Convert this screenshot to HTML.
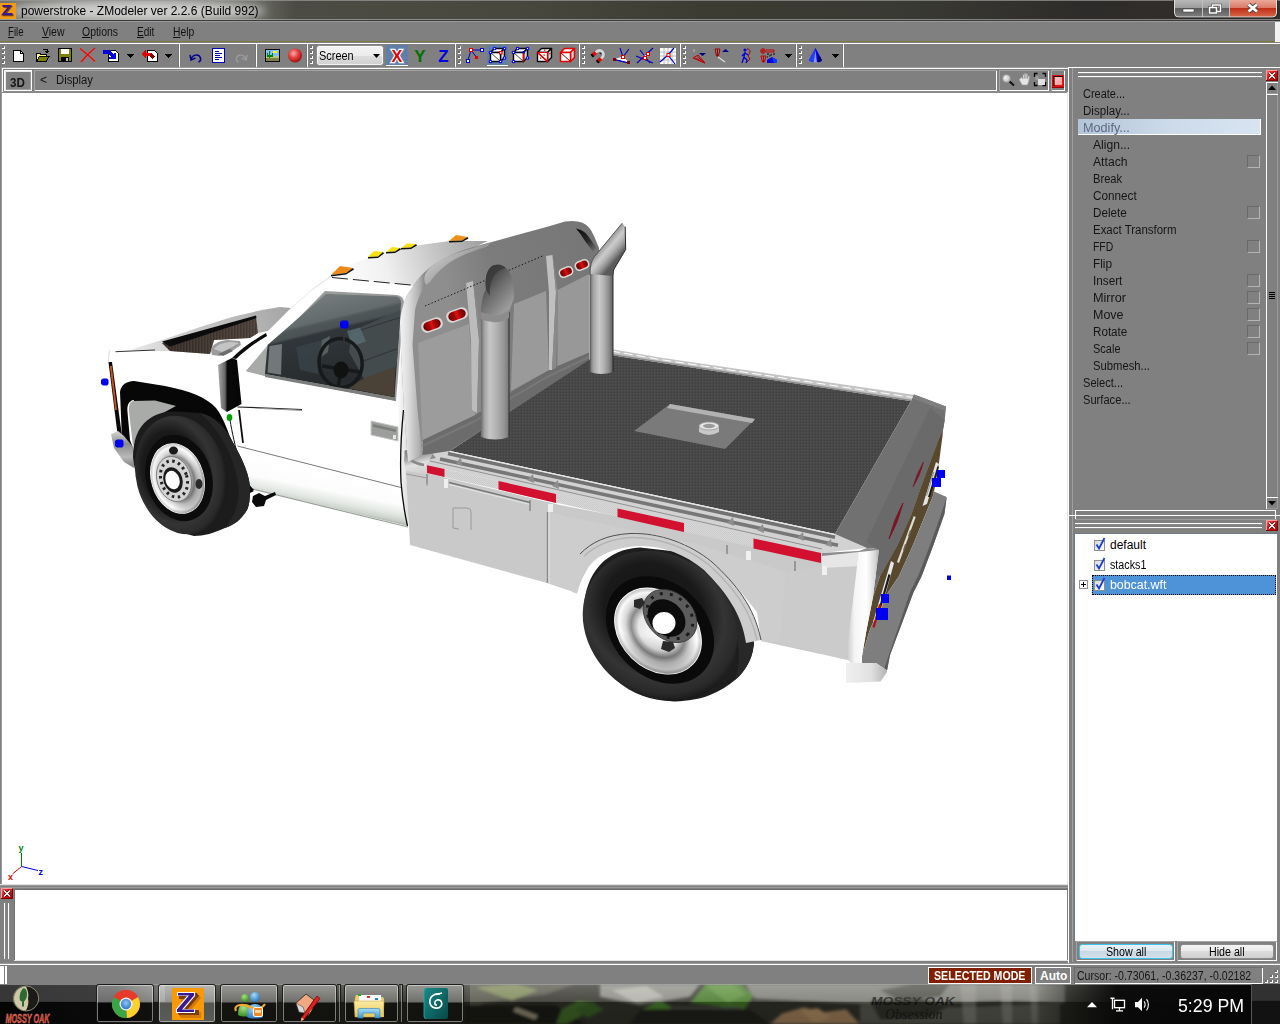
<!DOCTYPE html>
<html><head><meta charset="utf-8">
<style>
*{margin:0;padding:0;box-sizing:border-box}
html,body{width:1280px;height:1024px;overflow:hidden;background:#808080;font-family:"Liberation Sans",sans-serif;font-size:12px;color:#111}
.a{position:absolute}
.t{position:absolute;white-space:nowrap;transform-origin:0 0}
#title{left:0;top:0;width:1280px;height:21px;background:#4a4a44}
#menubar{left:0;top:21px;width:1280px;height:21px;background:#808080;border-top:1px solid #9a9a9a;border-bottom:1px solid #7c7c40}
#tb{left:0;top:43px;width:1280px;height:25px;background:#808080;border-top:1px solid #fff}
.hl{position:absolute;height:1px;background:#fff}
.vl{position:absolute;width:1px;background:#fff}
.box{position:absolute;border:1px solid #fff;box-shadow:0 0 0 1px #8c8c8c}
#vp{left:2px;top:93px;width:1065px;height:791px;background:#fff}
#msg{left:15px;top:890px;width:1052px;height:70px;background:#fff}
#tree{left:1075px;top:534px;width:202px;height:407px;background:#fff}
#task{left:0;top:984px;width:1280px;height:40px;background:#3a3a30;overflow:hidden}
.cmd{position:absolute;left:1083px;font-size:12px;color:#151515}
.cmd2{position:absolute;left:1093px;font-size:12px;color:#151515}
.cb{position:absolute;left:1247px;width:13px;height:13px;border:1px solid #b4b4b4;border-top-color:#6a6a6a;border-left-color:#6a6a6a}
</style></head><body>
<!--TITLE-->
<div class="a" id="title">
<svg class="a" style="left:0;top:0" width="1280" height="21">
<defs><linearGradient id="tg" x1="0" x2="1"><stop offset="0" stop-color="#74746f"/><stop offset=".12" stop-color="#8a8a86"/><stop offset=".2" stop-color="#6a6a64"/><stop offset=".23" stop-color="#4c4c44"/><stop offset=".4" stop-color="#48483e"/><stop offset=".55" stop-color="#3c3c32"/><stop offset=".7" stop-color="#3a3a34"/><stop offset=".85" stop-color="#2e2c2a"/><stop offset="1" stop-color="#34302c"/></linearGradient>
<filter id="bl"><feGaussianBlur stdDeviation="5"/></filter></defs>
<rect width="1280" height="21" fill="url(#tg)"/>
<ellipse cx="138" cy="11" rx="128" ry="10" fill="#dcdcdc" opacity=".85" filter="url(#bl)"/><rect x="0" y="0" width="1280" height="1" fill="#9a9a98" opacity=".7"/>
<rect x="0" y="19" width="1280" height="1" fill="#b8b8b8" opacity=".6"/><rect x="0" y="20" width="1280" height="1" fill="#3a3a3a"/>
<rect x="0" y="3" width="16" height="16" fill="#f39a14"/>
<path d="M3.5 6h9.5l-6.5 8h7v2.3h-11.5l6.8-8.2h-5.3z" fill="#7a4a10"/>
<path d="M2.5 5h9.5l-6.5 8h7v2.3h-11.5l6.8-8.2h-5.3z" fill="#3a1a8a"/>
</svg>
<div class="t" style="left:21px;top:3px;font-size:13px;color:#000;transform:scaleX(.921)">powerstroke - ZModeler ver 2.2.6 (Build 992)</div>
<svg class="a" style="left:1173px;top:0" width="107" height="19">
<defs><linearGradient id="wb" x1="0" y1="0" x2="0" y2="1"><stop offset="0" stop-color="#b8b8b8"/><stop offset=".45" stop-color="#9c9c9c"/><stop offset=".5" stop-color="#5c5c5c"/><stop offset="1" stop-color="#7e7e7e"/></linearGradient>
<linearGradient id="wr" x1="0" y1="0" x2="0" y2="1"><stop offset="0" stop-color="#eaa898"/><stop offset=".45" stop-color="#dc7a68"/><stop offset=".5" stop-color="#c03018"/><stop offset="1" stop-color="#d8684a"/></linearGradient></defs>
<path d="M1.500 0v13q0 4 4 4h94q4 0 4 -4v-13z" fill="url(#wb)"/>
<path d="M57 0h46.500v13q0 4 -4 4h-42.500z" fill="url(#wr)"/>
<path d="M29.500 0v17M56.500 0v17" stroke="#c0c0c0" stroke-width="1"/>
<path d="M1.500 0v13q0 4 4 4h94q4 0 4 -4v-13" fill="none" stroke="#dedede" stroke-width="1"/>
<path d="M.5 0v13q0 5 5 5h94q5 0 5 -5v-13" fill="none" stroke="#222" stroke-width="1" opacity=".6"/>
<rect x="10" y="9" width="11" height="3" fill="#fff" stroke="#444" stroke-width=".6"/>
<path d="M39.500 5h8v6.500h-8zM36.500 7.500h7v5.500h-7z" fill="none" stroke="#444" stroke-width="2.600"/>
<path d="M39.500 5h8v6.500h-8z" fill="none" stroke="#fff" stroke-width="1.500"/><path d="M36.500 7.500h7v5.500h-7z" fill="#555" stroke="#fff" stroke-width="1.500"/>
<path d="M75.500 4.500l8.500 7m0 -7l-8.500 7" stroke="#444" stroke-width="4.400"/><path d="M75.500 4.500l8.500 7m0 -7l-8.500 7" stroke="#fff" stroke-width="2.800"/>
</svg>
</div>
<!--MENU-->
<div class="a" id="menubar"></div>
<div class="t" style="left:8px;top:25px;font-size:12px;transform:scaleX(0.8)"><u>F</u>ile</div><div class="t" style="left:42px;top:25px;font-size:12px;transform:scaleX(0.87)"><u>V</u>iew</div><div class="t" style="left:82px;top:25px;font-size:12px;transform:scaleX(0.87)"><u>O</u>ptions</div><div class="t" style="left:137px;top:25px;font-size:12px;transform:scaleX(0.84)"><u>E</u>dit</div><div class="t" style="left:173px;top:25px;font-size:12px;transform:scaleX(0.86)"><u>H</u>elp</div>
<div class="a" style="left:1275px;top:22px;width:5px;height:20px;background:#f2f2f2"></div>
<!--TOOLBAR-->
<div class="a" id="tb"></div>
<svg class="a" style="left:0;top:0" width="1280" height="68" shape-rendering="crispEdges">
<rect x="2" y="46" width="3" height="3" fill="#fff"/><rect x="2" y="46" width="2" height="2" fill="#6c6c6c"/><rect x="2" y="51" width="3" height="3" fill="#fff"/><rect x="2" y="51" width="2" height="2" fill="#6c6c6c"/><rect x="2" y="56" width="3" height="3" fill="#fff"/><rect x="2" y="56" width="2" height="2" fill="#6c6c6c"/><rect x="2" y="61" width="3" height="3" fill="#fff"/><rect x="2" y="61" width="2" height="2" fill="#6c6c6c"/><rect x="310" y="46" width="3" height="3" fill="#fff"/><rect x="310" y="46" width="2" height="2" fill="#6c6c6c"/><rect x="310" y="51" width="3" height="3" fill="#fff"/><rect x="310" y="51" width="2" height="2" fill="#6c6c6c"/><rect x="310" y="56" width="3" height="3" fill="#fff"/><rect x="310" y="56" width="2" height="2" fill="#6c6c6c"/><rect x="310" y="61" width="3" height="3" fill="#fff"/><rect x="310" y="61" width="2" height="2" fill="#6c6c6c"/><rect x="458" y="46" width="3" height="3" fill="#fff"/><rect x="458" y="46" width="2" height="2" fill="#6c6c6c"/><rect x="458" y="51" width="3" height="3" fill="#fff"/><rect x="458" y="51" width="2" height="2" fill="#6c6c6c"/><rect x="458" y="56" width="3" height="3" fill="#fff"/><rect x="458" y="56" width="2" height="2" fill="#6c6c6c"/><rect x="458" y="61" width="3" height="3" fill="#fff"/><rect x="458" y="61" width="2" height="2" fill="#6c6c6c"/><rect x="582" y="46" width="3" height="3" fill="#fff"/><rect x="582" y="46" width="2" height="2" fill="#6c6c6c"/><rect x="582" y="51" width="3" height="3" fill="#fff"/><rect x="582" y="51" width="2" height="2" fill="#6c6c6c"/><rect x="582" y="56" width="3" height="3" fill="#fff"/><rect x="582" y="56" width="2" height="2" fill="#6c6c6c"/><rect x="582" y="61" width="3" height="3" fill="#fff"/><rect x="582" y="61" width="2" height="2" fill="#6c6c6c"/><rect x="683" y="46" width="3" height="3" fill="#fff"/><rect x="683" y="46" width="2" height="2" fill="#6c6c6c"/><rect x="683" y="51" width="3" height="3" fill="#fff"/><rect x="683" y="51" width="2" height="2" fill="#6c6c6c"/><rect x="683" y="56" width="3" height="3" fill="#fff"/><rect x="683" y="56" width="2" height="2" fill="#6c6c6c"/><rect x="683" y="61" width="3" height="3" fill="#fff"/><rect x="683" y="61" width="2" height="2" fill="#6c6c6c"/><rect x="799" y="46" width="3" height="3" fill="#fff"/><rect x="799" y="46" width="2" height="2" fill="#6c6c6c"/><rect x="799" y="51" width="3" height="3" fill="#fff"/><rect x="799" y="51" width="2" height="2" fill="#6c6c6c"/><rect x="799" y="56" width="3" height="3" fill="#fff"/><rect x="799" y="56" width="2" height="2" fill="#6c6c6c"/><rect x="799" y="61" width="3" height="3" fill="#fff"/><rect x="799" y="61" width="2" height="2" fill="#6c6c6c"/><rect x="179" y="44" width="1" height="23" fill="#fff"/><rect x="178" y="44" width="1" height="23" fill="#777"/><rect x="256" y="44" width="1" height="23" fill="#fff"/><rect x="255" y="44" width="1" height="23" fill="#777"/><rect x="307" y="44" width="1" height="23" fill="#fff"/><rect x="306" y="44" width="1" height="23" fill="#777"/><rect x="455" y="44" width="1" height="23" fill="#fff"/><rect x="454" y="44" width="1" height="23" fill="#777"/><rect x="579" y="44" width="1" height="23" fill="#fff"/><rect x="578" y="44" width="1" height="23" fill="#777"/><rect x="680" y="44" width="1" height="23" fill="#fff"/><rect x="679" y="44" width="1" height="23" fill="#777"/><rect x="796" y="44" width="1" height="23" fill="#fff"/><rect x="795" y="44" width="1" height="23" fill="#777"/><rect x="843" y="44" width="1" height="23" fill="#fff"/><rect x="842" y="44" width="1" height="23" fill="#777"/><path d="M127 54h7l-3.500 4z" fill="#000"/><path d="M165 54h7l-3.500 4z" fill="#000"/><path d="M785 54h7l-3.500 4z" fill="#000"/><path d="M832 54h7l-3.500 4z" fill="#000"/>
<!-- new -->
<path d="M13.500 50.500h7l3 3v8h-10z" fill="#fff" stroke="#000"/><path d="M20.500 50.500v3h3" fill="none" stroke="#000"/>
<!-- open -->
<path d="M36 60.500v-7h4l1 1h5v2" fill="#ffff80" stroke="#000"/><path d="M36.500 61.500l3 -5h9.500l-3 5z" fill="#808000" stroke="#000"/><path d="M43 49.500h4v3m-1.500 -1.500l1.500 1.500l1.500 -1.500" fill="none" stroke="#000"/>
<!-- save -->
<rect x="58.500" y="48.500" width="13" height="13" fill="#808000" stroke="#000"/><rect x="61" y="49" width="8" height="5" fill="#fff"/><rect x="61" y="57" width="8" height="4" fill="#000"/><rect x="66" y="58" width="2" height="3" fill="#c0c0c0"/>
<!-- import -->
<path d="M108.500 50.500h7l3 3v8h-10z" fill="#fff" stroke="#000"/><path d="M103 50h6l5 4v-1h2v6h-7v-2h2l-3 -3h-5z" fill="#0000e0"/>
<!-- export -->
<path d="M147.500 50.500h7l3 3v8h-10z" fill="#fff" stroke="#000"/><path d="M141 54l5 -4v2.500h4l5 4l-2 2.500l-4 -3.500h-3v2.500z" fill="#e00000"/><path d="M151 53l4 3.500l-2 2.500l-3.500 -3z" fill="#800000"/>
<!-- doc blue -->
<rect x="212.500" y="48.500" width="12" height="14" fill="#fff" stroke="#0000c0"/><path d="M215 51.500h4M215 53.500h7M215 55.500h5M215 57.500h7M215 59.500h4" stroke="#0000c0"/>
<!-- picture -->
<rect x="265.500" y="49.500" width="14" height="12" fill="#c0c080" stroke="#000"/><rect x="266" y="50" width="13" height="6" fill="#80c0ff"/><rect x="273" y="51" width="4" height="2" fill="#ffff00"/><path d="M269.500 51v9M267.500 53v3h5v-3" stroke="#008000" stroke-width="1.500" fill="none"/><rect x="266" y="58" width="13" height="3" fill="#808040"/>
</svg>
<svg class="a" style="left:0;top:0" width="1280" height="68">
<defs><radialGradient id="rs" cx=".4" cy=".35" r=".65"><stop offset="0" stop-color="#ffb0b0"/><stop offset=".5" stop-color="#e84040"/><stop offset="1" stop-color="#a01010"/></radialGradient>
<linearGradient id="cbg" x1="0" y1="0" x2="0" y2="1"><stop offset="0" stop-color="#f4f4f4"/><stop offset=".5" stop-color="#ebebeb"/><stop offset=".52" stop-color="#dddddd"/><stop offset="1" stop-color="#cfcfcf"/></linearGradient></defs>
<!-- red X -->
<path d="M80 48.500c5 4 10 8 15 13M95 48c-5 4 -10 9 -14 14" stroke="#f00" stroke-width="1.300" fill="none"/>
<!-- undo -->
<path d="M190 55l1 5l4.500 -2M191 59c2 -5 8 -5 9.500 -1c.5 2 -.5 3.500 -2 4" fill="none" stroke="#000090" stroke-width="1.500"/>
<!-- redo -->
<path d="M247 55l-1 5l-4.500 -2M246 59c-2 -5 -8 -5 -9.500 -1c-.5 2 .5 3.500 2 4" fill="none" stroke="#999" stroke-width="1.500"/>
<circle cx="295" cy="55.500" r="7" fill="url(#rs)"/>
<!-- combobox -->
<rect x="316.500" y="45.500" width="67" height="20" rx="3" fill="url(#cbg)" stroke="#8a8a8a"/><rect x="317.500" y="46.500" width="65" height="18" rx="2" fill="none" stroke="#fff" opacity=".7"/>
<path d="M373 54h7l-3.500 4z" fill="#000"/>
<!-- XYZ -->
<rect x="386" y="45" width="22" height="21" fill="#5f7fa8"/><rect x="386" y="65" width="22" height="1" fill="#fff"/>
<text x="397" y="62" font-family="Liberation Sans" font-weight="700" font-size="17" text-anchor="middle" fill="#e00000" stroke="#fff" stroke-width="2.500" paint-order="stroke" transform="translate(397 0) scale(.95 1) translate(-397 0)">X</text>
<text x="420" y="62" font-family="Liberation Sans" font-weight="700" font-size="17" text-anchor="middle" fill="#007000">Y</text>
<text x="443.500" y="62" font-family="Liberation Sans" font-weight="700" font-size="17" text-anchor="middle" fill="#0000e0">Z</text>
<!-- sel modes -->
<rect x="487" y="45" width="21" height="21" fill="#5f7fa8"/><rect x="487" y="65" width="21" height="1" fill="#fff"/>
</svg>
<div class="t" style="left:319px;top:48px;font-size:13px;color:#000;transform:scaleX(.84)">Screen</div>
<svg class="a" style="left:0;top:0" width="1280" height="68">
<!-- polyline -->
<g transform="translate(466 48)"><path d="M2 12l3 -10h11M5 2l6 8" fill="none" stroke="#0000c0" stroke-width="1"/><rect x="3.5" y="0.5" width="3" height="3" fill="#fff" stroke="#e00000" stroke-width="1"/><rect x="14.5" y="0.5" width="3" height="3" fill="#fff" stroke="#0000e0" stroke-width="1"/><rect x="0.5" y="11.5" width="3" height="3" fill="#fff" stroke="#0000e0" stroke-width="1"/><rect x="9" y="8" width="3" height="3" fill="#e00000"/></g>
<g transform="translate(490 48)" fill="#fff" stroke="#000" stroke-width="1.4" stroke-linejoin="round"><path d="M.5 4.500l4 -4h10l-4 4z"/><path d="M14.500 .5v9l-4 4v-9z" fill="#d8d8d8"/><path d="M.5 4.500h10v9h-10z"/><path d="M.5 4.500l10 9" stroke="#444" stroke-width="1"/><circle cx="0.5" cy="4.5" r="1.300" fill="#fff" stroke="#0000f0" stroke-width="1.100"/><circle cx="4.5" cy="0.5" r="1.300" fill="#fff" stroke="#0000f0" stroke-width="1.100"/><circle cx="14.5" cy="0.5" r="1.300" fill="#fff" stroke="#0000f0" stroke-width="1.100"/><circle cx="14.5" cy="10" r="1.300" fill="#fff" stroke="#0000f0" stroke-width="1.100"/><circle cx="10.5" cy="13.5" r="1.300" fill="#fff" stroke="#0000f0" stroke-width="1.100"/><circle cx="0.5" cy="13.5" r="1.300" fill="#fff" stroke="#0000f0" stroke-width="1.100"/><rect x="9.500" y="3.500" width="2.500" height="2.500" fill="#fff" stroke="#e80000" stroke-width="1.200"/></g><g transform="translate(513 48)" fill="#fff" stroke="#000" stroke-width="1.4" stroke-linejoin="round"><path d="M.5 4.500l4 -4h10l-4 4z"/><path d="M14.500 .5v9l-4 4v-9z" fill="#d8d8d8"/><path d="M.5 4.500h10v9h-10z"/><path d="M.5 4.500l10 9" stroke="#444" stroke-width="1"/><path d="M10.500 4.500v9" stroke="#e80000" stroke-width="1.500"/><circle cx="0.5" cy="4.5" r="1.300" fill="#fff" stroke="#0000f0" stroke-width="1.100"/><circle cx="4.5" cy="0.5" r="1.300" fill="#fff" stroke="#0000f0" stroke-width="1.100"/><circle cx="14.5" cy="0.5" r="1.300" fill="#fff" stroke="#0000f0" stroke-width="1.100"/><circle cx="14.5" cy="10" r="1.300" fill="#fff" stroke="#0000f0" stroke-width="1.100"/><circle cx="0.5" cy="13.5" r="1.300" fill="#fff" stroke="#0000f0" stroke-width="1.100"/><rect x="9.500" y="3" width="2.500" height="2.500" fill="#0000f0" stroke="none"/></g><g transform="translate(537 48)" fill="#fff" stroke="#000" stroke-width="1.4" stroke-linejoin="round"><path d="M.5 4.500l4 -4h10l-4 4z"/><path d="M14.500 .5v9l-4 4v-9z" fill="#d8d8d8"/><path d="M.5 4.500h10v9h-10z"/><path d="M.5 4.500L10.500 13.500L10.500 4.500Z" fill="#fff" stroke="#e80000" stroke-width="1.200"/><path d="M.5 4.500L10.500 13.500" stroke="#e80000" stroke-width="1.200"/><rect x="3" y="9.500" width="1.300" height="1.300" fill="#e80000" stroke="none"/><rect x="6.500" y="6.500" width="1.300" height="1.300" fill="#e80000" stroke="none"/><rect x="7" y="1.500" width="1.300" height="1.300" fill="#e80000" stroke="none"/><rect x="12.300" y="5" width="1.300" height="1.300" fill="#e80000" stroke="none"/></g>
<g transform="translate(560 48)" fill="#fff" stroke="#e80000" stroke-width="1.5" stroke-linejoin="round"><path d="M.5 4.500l4 -4h10l-4 4z"/><path d="M14.500 .5v9l-4 4v-9z" fill="#d8d8d8"/><path d="M.5 4.500h10v9h-10z"/><path d="M.5 4.500l10 9" stroke="#900" stroke-width="1"/></g>
<!-- magnet -->
<g transform="translate(599.500 54.500) rotate(48)" fill="none"><path d="M-4 5V0A4 4 0 0 1 4 0V5" stroke="#777" stroke-width="4.200"/><path d="M-4 5V0A4 4 0 0 1 4 0V5" stroke="#d4d4d4" stroke-width="2.800"/><path d="M-4 1.500V5.500M4 1.500V5.500" stroke="#e80000" stroke-width="3.600"/><path d="M-4 5V7M4 5V7" stroke="#000" stroke-width="3.600"/><path d="M-1 -1l1.500 -1" stroke="#000" stroke-width="1"/></g>
<g transform="translate(613 48)"><path d="M7 0l3 9l6 -8M1 11.500l15 3.500" fill="none" stroke="#0000c0" stroke-width="1.100"/><path d="M2 11l8 -2.500l6 6z" fill="#fff"/><path d="M1 11.500l15 3.500" fill="none" stroke="#0000c0" stroke-width="1.100"/><rect x="8.5" y="7.5" width="3" height="3" fill="#fff" stroke="#e00000" stroke-width="1"/><rect x="0" y="10" width="3" height="3" fill="#800000"/><rect x="14" y="13" width="3" height="3" fill="#800000"/></g>
<g transform="translate(636 48)"><path d="M0 8l17 7M1 15l16 -15M4 2l10 13" fill="none" stroke="#0000c0" stroke-width="1.100"/><path d="M6 9l5 -3l2 2z" fill="#fff"/><rect x="10.5" y="4.5" width="3" height="3" fill="#fff" stroke="#e00000" stroke-width="1"/><rect x="7.5" y="8.5" width="3" height="3" fill="#fff" stroke="#e00000" stroke-width="1"/></g>
<g transform="translate(660 48)"><rect x="0" y="0" width="16" height="16" fill="#fff"/><path d="M4 0v16M8 0v16M12 0v16M0 4h16M0 8h16M0 12h16" stroke="#b8b8b8" stroke-width="1"/><path d="M0 14l8 -7l6 -7M8 7l7 9" fill="none" stroke="#0000e0" stroke-width="1.200"/><rect x="7" y="5.5" width="3" height="3" fill="#fff" stroke="#e00000" stroke-width="1"/></g>
<!-- group 4 -->
<g transform="translate(692 48)"><path d="M2 1v3" stroke="#bbb"/><path d="M7 5h7l-3.500 3z" fill="#000080"/><path d="M1 10l12 5l-7 -8zM3 10l10 5M5 8.500l8 6.500" fill="none" stroke="#c00000" stroke-width="1"/></g>
<g transform="translate(714 48)"><path d="M1 1h5l-1.500 7h-2zM3.500 1v7" fill="none" stroke="#a00000" stroke-width="1"/><path d="M8 4h7l-3.500 -3z" fill="#000080"/><path d="M4 9l7 5" stroke="#ddd" stroke-width="1.200"/></g>
<g transform="translate(740 48)" fill="none"><circle cx="5" cy="2" r="1.600" fill="#0000e0"/><path d="M5 4l-1 5l-2 6M4 9l3 3l-1 3M5 5l-3 3M5 5l3 2" stroke="#0000e0" stroke-width="1.300"/><path d="M7 1c3 0 4 2 2 5l-1 2l2 3l-3 3" stroke="#a00000" stroke-width="1"/></g>
<g transform="translate(760 48)"><circle cx="3" cy="3" r="2.300" fill="none" stroke="#c00000"/><path d="M3 1v4M1 3h4M6 2h8v2h-8M1 8h5l-1.500 6h-2zM3.500 8v6" fill="none" stroke="#c00000" stroke-width="1"/><path d="M7 6h2M10 7h2M13 6h2M7 9h1M9 8h1" stroke="#000" stroke-width="1"/><path d="M7 15v-3l5 -3l5 3v3z" fill="#0000e0"/><path d="M12 9l5 3v3h-3z" fill="#0040ff"/></g>
<!-- cone -->
<g transform="translate(809 48)"><path d="M6.500 0l6.500 12c-1 3 -12 3 -13 0z" fill="#0000e0"/><path d="M6.500 0l-2 14.500c-2 -.3 -4 -1.500 -4.500 -2.500z" fill="#2040ff"/><path d="M6.500 2l1.500 12.500l-3.500 0z" fill="#d0d0ff" opacity=".7"/><path d="M9 6l4 6c-.5 1.500 -2 2 -4 2.500z" fill="#000070"/></g>
</svg>
<!--VIEWPORT-->
<div class="a" id="vp"></div>
<svg class="a" style="left:2px;top:92px" width="1065" height="792" viewBox="2 92 1065 792">
<defs>
<linearGradient id="hoodg" x1="130" y1="350" x2="290" y2="306" gradientUnits="userSpaceOnUse"><stop offset="0" stop-color="#e8e8e8"/><stop offset=".3" stop-color="#cfcfcf"/><stop offset=".7" stop-color="#b8b8b8"/><stop offset="1" stop-color="#a4a4a4"/></linearGradient>
<linearGradient id="texg" x1="0" y1="0" x2="1" y2="0"><stop offset="0" stop-color="#2a2420"/><stop offset="1" stop-color="#5a5048"/></linearGradient>
<pattern id="texp" width="3" height="4" patternUnits="userSpaceOnUse"><rect width="3" height="4" fill="#54463f"/><rect width="1.500" height="4" fill="#352b27"/></pattern>
<linearGradient id="glassg" x1="320" y1="293" x2="341" y2="380" gradientUnits="userSpaceOnUse"><stop offset="0" stop-color="#757d7f"/><stop offset=".3" stop-color="#636b6d"/><stop offset=".335" stop-color="#4f5759"/><stop offset=".41" stop-color="#4a5254"/><stop offset=".44" stop-color="#30363a"/><stop offset="1" stop-color="#272b2d"/></linearGradient>
<linearGradient id="rockg" x1="330" y1="468" x2="322" y2="508" gradientUnits="userSpaceOnUse"><stop offset="0" stop-color="#fff"/><stop offset=".55" stop-color="#fbfcfb"/><stop offset=".8" stop-color="#e2e6e2"/><stop offset=".93" stop-color="#ccd2cc"/><stop offset="1" stop-color="#b0b8b0"/></linearGradient>
<linearGradient id="bumpg" x1="0" y1="0" x2="0" y2="1"><stop offset="0" stop-color="#d8d8d8"/><stop offset=".35" stop-color="#8a8a8a"/><stop offset=".7" stop-color="#b8b8b8"/><stop offset="1" stop-color="#7a7a7a"/></linearGradient>
<linearGradient id="mirg" x1="0" y1="0" x2="1" y2="0"><stop offset="0" stop-color="#aaa"/><stop offset=".3" stop-color="#666"/><stop offset=".4" stop-color="#0a0a0a"/><stop offset="1" stop-color="#050505"/></linearGradient>
<linearGradient id="bpil" x1="396" y1="0" x2="412" y2="0" gradientUnits="userSpaceOnUse"><stop offset="0" stop-color="#fff"/><stop offset="1" stop-color="#d0d0d0"/></linearGradient>
</defs>
<!-- hood -->
<path d="M130 350L165 339L200 327L232 317L262 310L280 307L291 308L268 331L258 333L256 317L162 343L170 351L150 351Z" fill="url(#hoodg)"/>
<path d="M162 343L256 317L258 333L250 338L214 340L210 354L170 351Z" fill="url(#texp)"/>
<path d="M162 343L256 317L258 333L250 338L214 340L210 354L170 351Z" fill="url(#texg)" opacity=".45"/>
<path d="M162 341.500L256 315.500L256.500 318L170 346.500Z" fill="#0c0c0c"/>
<path d="M115.500 351.700L155 350" stroke="#333" stroke-width="1" fill="none"/>
<!-- cowl blob -->
<path d="M211 350c1 -6 8 -9 16 -10l13 1l1 4l-9 6l-12 5l-8 -1z" fill="#9c9c9c"/><path d="M214 349c4 -5 10 -7 18 -7l7 1l-7 4l-10 5z" fill="#c4c4c4"/><path d="M218 354l12 -5l3 2l-10 5z" fill="#6c6c6c"/>
<!-- a pillar black sweep -->
<path d="M266 333C254 340 242 348 232 358L236 359C246 350 256 342 267 336Z" fill="#0a0a0a"/>
<!-- window frame -->
<path d="M246 371L325 291L397 295Q404 296 404 303L396 401L265 376Z" fill="#9a9c9a"/>
<path d="M246 371L267 346L265 376Z" fill="#a8aaa8"/>
<path d="M267.500 345L326 294L396 296.500Q401 297 401 303L394.500 397.500L265 374Z" fill="url(#glassg)"/>
<!-- interior -->
<path d="M352 331L400.500 310L396.500 367L364 379L349 352Z" fill="#434b4d"/>
<path d="M347 388L364 378.500L395.500 367L394.200 397Z" fill="#4a4236"/>
<path d="M350 333.500L400 317.500M362 361.500L396.500 349" stroke="#30363a" stroke-width="1.200" fill="none"/>
<path d="M269.500 346L282 344L281 374.800L267.500 372.500Z" fill="#72787a"/>
<path d="M347 331l13 -3.500l6 14l-14 5z" fill="#586a72" opacity=".85"/>
<path d="M296 347L322 340L318 374L300 370Z" fill="#3a4448" opacity=".8"/>
<path d="M322 340L330 336L328 352L320 358Z" fill="#6a7274" opacity=".7"/>
<!-- steering wheel -->
<ellipse cx="340.600" cy="363" rx="21.500" ry="24.500" transform="rotate(-8 340.600 363)" fill="none" stroke="#161a1a" stroke-width="3.500"/>
<path d="M341 369L322 366M341 369L360 372M341 369L338 388" stroke="#161a1a" stroke-width="3.500" fill="none"/><ellipse cx="341" cy="370" rx="7.500" ry="8.500" fill="#101212"/>
<path d="M344 329v12" stroke="#3a4040" stroke-width="1" fill="none"/>
<path d="M265 374L394.500 397.500L396 401L265 377Z" fill="#7c7e7c"/>
<!-- roof line / A-pillar -->
<path d="M291 308L313 289" stroke="#e8e8e8" stroke-width="1" fill="none"/>
<!-- mirror -->
<path d="M218 365L232 358L237 360L241.500 404L227 412L221 408Z" fill="url(#mirg)"/>
<path d="M237.500 407L302 409.500" stroke="#222" stroke-width="1.200" fill="none"/><path d="M262 408.500L302 410.500" stroke="#999" stroke-width="1" fill="none"/>
<!-- door seams -->
<path d="M239 410L243 443" stroke="#0a0a0a" stroke-width="1.800" fill="none"/>
<path d="M230 420C232 432 235 446 240 464C244 476 248 484 254 489" stroke="#111" stroke-width="1" fill="none"/>
<!-- rocker shading -->
<path d="M237 446L401 487.500L408 526L250 488Z" fill="url(#rockg)"/>
<path d="M237.500 446L401 487.500" stroke="#555" stroke-width=".8" fill="none"/>
<path d="M250 488.500L408 527" stroke="#98a098" stroke-width="1.200" fill="none"/>
<!-- B pillar / cab rear edge -->
<path d="M398 400L404 300L410 330L412 480L408 526L401 488Z" fill="url(#bpil)" opacity=".9"/>
<path d="M403.500 410Q399.500 450 401 482Q403 506 407.500 526" stroke="#0a0a0a" stroke-width="1.300" fill="none"/>
<!-- door handle -->
<path d="M371 421L398 427L398 441L371 435Z" fill="#9c9e9c" stroke="#c8c8c8" stroke-width="1"/><path d="M373 424L396 429.500L396 432L373 427Z" fill="#7c7e7c"/><rect x="393" y="435" width="3" height="4" fill="#e8e8e8"/>
<!-- fender arch black -->
<path d="M120 392C121 385 126 381.500 134 381L165 386C190 391 206 397 216 408C224 418 230 436 238 460C242 474 248 484 254 490L236 492L226 470L222 444C216 430 210 420 200 413C188 407 172 404 155 400L133 400C128 402 127 406 127.500 412L130 440L133 448L122 440Z" fill="#070707"/>
<!-- wheel well black -->
<path d="M134 400L165 388C190 393 206 399 216 410C224 420 230 438 238 462C242 476 248 486 254 491L236 500L190 480L140 440L130 410Z" fill="#070707"/>
<!-- inner fender gray -->
<path d="M133 401L155 400.500L176 406L150 420L138 436L133 446L129 412C128.500 405 130 402 133 401Z" fill="#a9aba9"/>
<!-- front edge / marker light -->
<path d="M108.500 362L112 362L122 436L118 438Z" fill="#0a0a0a"/>
<path d="M109.800 366L111.800 366L117 410L115.200 410Z" fill="#c8501c"/>
<path d="M110 350Q108 356 108.500 362" stroke="#ddd" stroke-width="1" fill="none"/>
<!-- bumper -->
<path d="M111 434L118 431L124 436L133 447L134 468L124 462L114 448Z" fill="url(#bumpg)"/>
<!-- under-body bits -->
<path d="M253 496l6 -3l6 3l10 -4l1 3l-10 5l-2 6l-8 1l-4 -5z" fill="#0a0a0a"/>
<defs>
<radialGradient id="tireF" cx=".42" cy=".45" r=".6"><stop offset="0" stop-color="#101010"/><stop offset=".55" stop-color="#1a1a1a"/><stop offset=".75" stop-color="#343434"/><stop offset=".9" stop-color="#2a2a2a"/><stop offset="1" stop-color="#161616"/></radialGradient>
<radialGradient id="rimg" cx=".5" cy=".5" r=".5"><stop offset="0" stop-color="#fff"/><stop offset=".45" stop-color="#e8e8e8"/><stop offset=".62" stop-color="#8c8c8c"/><stop offset=".75" stop-color="#d8d8d8"/><stop offset=".9" stop-color="#fff"/><stop offset="1" stop-color="#c0c0c0"/></radialGradient>
<linearGradient id="rimsh" x1="0" y1="0" x2="1" y2="1"><stop offset="0" stop-color="#000" stop-opacity=".05"/><stop offset=".55" stop-color="#000" stop-opacity=".0"/><stop offset="1" stop-color="#000" stop-opacity=".45"/></linearGradient>
</defs>
<!-- REAR WHEEL -->
<path d="M584 606C585 590 590 576 600 565C610 554 625 548 640 547.500L680 552C695 556 705 563 715 572C728 584 736 594 741 602C748 616 753 630 754 640C754 648 752 656 749 662C745 670 740 676 735 680C728 686 720 691 710 695C700 699 688 701 675 701.500C665 700 655 699 645 696C635 692 626 687 618 680C610 672 603 664 598 655C592 645 588 636 586 627C584 620 584 613 584 606Z" fill="#1e1e1e"/>
<path d="M680 552C695 556 705 563 715 572C728 584 736 594 741 602C748 616 753 630 754 640C754 648 752 656 749 662C745 670 740 676 735 680C740 664 740 648 735 630C728 604 708 574 680 552Z" fill="#282828"/>
<ellipse cx="660" cy="626" rx="82" ry="70" transform="rotate(40 660 626)" fill="url(#tireF)"/>
<ellipse cx="660" cy="630" rx="60" ry="47" transform="rotate(44 660 630)" fill="#0a0a0a"/>
<ellipse cx="658" cy="631" rx="48" ry="37.500" transform="rotate(44 658 631)" fill="url(#rimg)" stroke="#f8f8f8" stroke-width="1.200"/>
<ellipse cx="658" cy="631" rx="48" ry="37.500" transform="rotate(44 658 631)" fill="url(#rimsh)"/>
<ellipse cx="670" cy="616" rx="30" ry="23" transform="rotate(44 670 616)" fill="#5c5c5c" stroke="#333" stroke-width=".8"/>
<ellipse cx="670" cy="616" rx="25.500" ry="19.500" transform="rotate(44 670 616)" fill="none" stroke="#1c1c1c" stroke-width="3" stroke-dasharray="3 7"/>
<ellipse cx="666.500" cy="618" rx="21" ry="16.500" transform="rotate(44 666.500 618)" fill="#0c0c0c"/>
<ellipse cx="664" cy="623" rx="11.500" ry="11" fill="#fff"/>
<path d="M634 600l8 -2l3 5l-5 6l-6 -2z" fill="#2a2a2a"/><path d="M663 641l10 1l2 6l-6 4l-8 -3z" fill="#2a2a2a"/>
<defs>
<pattern id="floorp" width="3" height="3" patternUnits="userSpaceOnUse"><rect width="3" height="3" fill="#484848"/><rect width="1" height="1" fill="#525252"/><rect x="2" y="2" width="1" height="1" fill="#3e3e3e"/></pattern>
<pattern id="tapep" width="2" height="2" patternUnits="userSpaceOnUse"><rect width="2" height="2" fill="#d8d8d8"/><rect width="1" height="1" fill="#c8c8c8"/><rect x="1" y="1" width="1" height="1" fill="#cccccc"/></pattern>
<linearGradient id="cpost" x1="846" y1="0" x2="880" y2="0" gradientUnits="userSpaceOnUse"><stop offset="0" stop-color="#c4c4c4"/><stop offset=".25" stop-color="#f4f4f4"/><stop offset=".6" stop-color="#ffffff"/><stop offset=".85" stop-color="#d8d8d8"/><stop offset="1" stop-color="#a8a8a8"/></linearGradient>
<linearGradient id="bend" x1="846" y1="0" x2="888" y2="0" gradientUnits="userSpaceOnUse"><stop offset="0" stop-color="#f0f0f0"/><stop offset=".6" stop-color="#e0e0e0"/><stop offset="1" stop-color="#b0b0b0"/></linearGradient>
<linearGradient id="cabbase" x1="412" y1="450" x2="418" y2="474" gradientUnits="userSpaceOnUse"><stop offset="0" stop-color="#8c8c8c"/><stop offset=".35" stop-color="#a8a8a8"/><stop offset=".6" stop-color="#e0e0e0"/><stop offset="1" stop-color="#d0d0d0"/></linearGradient>
</defs>
<!-- side body lower (under bed) -->
<path d="M406 470L426 473L560 505L700 532L822 560L860 552L860 566L848 660L761 641L761 612L735 585L710 560L685 544L655 534L622 534L600 540L585 556L580 575L577 593L547 583L410 545Z" fill="#c9c9c9"/>
<path d="M547.500 512L547.500 583L577 593L580 575L585 556L600 540L622 534L655 534L685 544L710 560L735 585L757 612L761 641L780 643L786 572L700 545Z" fill="#cdcdcd"/>
<path d="M786 572L822 566L860 566L848 660L780 643Z" fill="#cbcbcb"/>
<path d="M822 553L859 551L860 566L822 568Z" fill="#e6e6e6"/>
<path d="M547.500 512L547.500 583" stroke="#8a8a8a" stroke-width="1.500" fill="none"/>
<path d="M549 512L549 583" stroke="#e4e4e4" stroke-width="1" fill="none"/>
<!-- wheel arch lip + line -->
<path d="M580 554C592 542 606 535 630 533.500C660 532.500 690 544 712 562C736 584 754 606 761 640L746 643C742 614 726 592 704 570C684 553 660 545 638 546C612 548 596 556 588 568C582 578 579 586 577 593.500L572 592Z" fill="#cdcdcd"/>
<path d="M580 554C592 542 606 535 630 533.500C660 532.500 690 544 712 562C736 584 754 606 761 640" stroke="#505050" stroke-width="1" fill="none"/>
<path d="M584 556C595 546 608 539 630 537.500C658 536.500 688 548 709 565C732 586 750 608 757 640" stroke="#b4b4b4" stroke-width="1.500" fill="none"/>
<!-- toolbox handle + rails -->
<path d="M453 508h14q4 0 4 4v18M453 508v20l6 1" stroke="#9a9a9a" stroke-width="1" fill="none"/>
<path d="M449 482.500L530 502.500" stroke="#777" stroke-width="1.500" fill="none"/><path d="M449 484.500L530 504.500" stroke="#e4e4e4" stroke-width="1" fill="none"/>
<path d="M427 474v10M530 500v11M727 545v9M795 561v10" stroke="#777" stroke-width="1.200" fill="none"/>
<path d="M444 479h4v9h-4zM548 504h5v8h-5zM746 551h5v9h-5zM822 566h5v9h-5z" fill="#f0f0f0"/>
<path d="M406 474L427 478L427 486" stroke="#999" stroke-width="1" fill="none"/>
<!-- bed floor -->
<path d="M450 451L587.500 360L611 355L911 401L835 534Z" fill="url(#floorp)"/>
<!-- far side rail -->
<path d="M611 349L660 357.500L915 395L911 401L660 362.500L611 355Z" fill="#c4c4c4"/>
<path d="M611 354.500L660 362L911 400.500" stroke="#8a8a8a" stroke-width="1.500" fill="none"/>
<path d="M611 351L660 359.500L913 397.500" stroke="#fff" stroke-width="1" stroke-dasharray="9 4" fill="none"/>
<!-- near side rails (layered) -->
<path d="M432 453L450 451L835 534L867 548L822 553L426 465Z" fill="#d2d2d2"/>
<path d="M448 453.600L835 537.200" stroke="#727272" stroke-width="3.600" fill="none"/>
<path d="M440 459L838 545.200" stroke="#777777" stroke-width="3.600" fill="none"/>
<path d="M450 451.500L835 534.500" stroke="#e8e8e8" stroke-width="1.200" fill="none"/>
<path d="M430 461L822 549" stroke="#909090" stroke-width="1" fill="none"/>
<!-- rail brackets -->
<path d="M432 453l4 5l-9 2zM456 463l5 -6l1 9zM527 480l6 -6l1 9zM552 486l6 -6l1 9zM727 523l6 -6l1 9zM757 530l6 -6l1 9zM797 538l6 -6l1 9zM825 545l6 -6l1 8z" fill="#8e8e8e"/>
<!-- reflective tape -->
<path d="M426 465L822 552L822 563L426 473Z" fill="url(#tapep)"/>
<path d="M426 465L444.500 469L444.500 477L427 473Z" fill="#d21030"/>
<path d="M498.500 481L556 494L556 503L498.500 489.500Z" fill="#d21030"/>
<path d="M617.500 508.500L684 523L684 532L617.500 517Z" fill="#d21030"/>
<path d="M753.500 538.500L821 553L821 563L753.500 548.500Z" fill="#d21030"/>
<!-- cab base chrome curve -->
<path d="M405 450L434 452L427 464L427 474L406 471L404 460Z" fill="url(#cabbase)"/><path d="M405.500 451Q407 462 424 465" stroke="#8a8a8a" stroke-width="2.500" fill="none"/>
<!-- hitch plate -->
<path d="M670 404L755 419L725 449L634 431Z" fill="#7a7a7a"/>
<path d="M670 404L755 419L752 423L667 408Z" fill="#b2b2b2"/>
<path d="M699 426L699 432Q709 438 719 432L719 426Z" fill="#c8c8c8"/><ellipse cx="709" cy="426" rx="10" ry="4" fill="#e4e4e4" stroke="#999" stroke-width=".8"/><ellipse cx="709" cy="426" rx="6" ry="2.200" fill="#9a9a9a"/>
<!-- rear rail + gray skirt -->
<path d="M911 401L914 394.500L946 406.500L944.700 420.500L943 430L940 435.600L922.500 482.500L911.500 514L897.500 545L880 576L872.800 598L879 550L877.500 549L867 548L835 534Z" fill="#717171"/>
<path d="M914 394.500L946 406.500L945.500 411L913 398.500Z" fill="#7e7e7e"/>
<path d="M930 408L866 542L877.500 549L879 550L876 574L880 576L897.500 545L911.500 514L922.500 482.500L940 435.600L943 430L944.700 420Z" fill="#6a6a6a"/>
<!-- red reflectors on skirt -->
<path d="M923.500 462Q920.500 475 913 487Q916.500 474 923.500 462Z" fill="#7c1424" stroke="#7c1424" stroke-width=".6"/>
<path d="M903 503Q898.500 522 889 539Q893.500 520 903 503Z" fill="#7c1424" stroke="#7c1424" stroke-width=".8"/>
<!-- brown rear face -->
<path d="M943 430L942.500 436L938 470L933.400 495L925.600 514L913 545L899 576L883.750 598.750L869.700 630L862 656L866.500 630L872.800 598L880 576L897.500 545L911.500 514L922.500 482.500L940 435.600Z" fill="#57482e"/>
<!-- rear bumper -->
<path d="M933 491L946.700 497L944.400 514L933.400 545L921.700 576L913.400 592.500L890 655L887 670.600L876 663L862 663L862 656L869.700 630L883.750 598.750L899 576L913 545L925.600 514L933.400 495Z" fill="#7e7e7e"/>
<path d="M946.700 497L944.400 514L933.400 545L921.700 576L913.400 592.500L890 655L887 670.600L884.500 668L910.500 591L918.500 575L930.500 544L941.500 513Z" fill="#5a5a5a"/>
<!-- tail lights / plate details -->
<path d="M936 462L939 464L927 504L922.500 506Z" fill="#e4e4e4"/><path d="M937.500 466L939 467L930 497L928 497Z" fill="#1a1a1a"/><path d="M933 472L934.500 472L927 496L926 495.500Z" fill="#9a9a9a"/>
<path d="M913.700 516L915.700 517L899 563L897 562Z" fill="#e0dcd0"/><path d="M910 530l1.500 .5l-2 6l-1.500 -.5zM905 544l1.500 .5l-2 6l-1.500 -.5z" fill="#6a6458"/>
<path d="M891 561L894 563L879 618L873 622Z" fill="#e8e8e8"/><path d="M888.500 574L890.500 575L880 612L878 611Z" fill="#1a1a1a"/><path d="M879 604L881.500 605L874.500 628L872.500 627Z" fill="#b01018"/>
<!-- corner post -->
<path d="M858.750 552L879 550L872.800 598L866.500 630L862 656L862 663L851 663L846 658Z" fill="url(#cpost)"/>
<path d="M822 553L859 551L867 548L877.500 549L879 550L858.750 552L822 556Z" fill="#8c8c8c"/>
<!-- bumper end cap -->
<path d="M846 662.800L863.400 663L876 663L887 670.600L887 672L880.600 681.500L846 683Z" fill="url(#bend)"/>
<defs>
<linearGradient id="roofg" x1="335" y1="280" x2="480" y2="240" gradientUnits="userSpaceOnUse"><stop offset="0" stop-color="#ffffff"/><stop offset=".35" stop-color="#f0f0f0"/><stop offset=".7" stop-color="#c4c4c4"/><stop offset="1" stop-color="#a2a2a2"/></linearGradient>
<linearGradient id="postg" x1="400" y1="0" x2="424" y2="0" gradientUnits="userSpaceOnUse"><stop offset="0" stop-color="#f4f4f4"/><stop offset=".35" stop-color="#dcdcdc"/><stop offset=".8" stop-color="#b0b0b0"/><stop offset="1" stop-color="#8c8c8c"/></linearGradient>
<linearGradient id="postg2" x1="420" y1="250" x2="450" y2="285" gradientUnits="userSpaceOnUse"><stop offset="0" stop-color="#e8e8e8"/><stop offset=".6" stop-color="#b4b4b4"/><stop offset="1" stop-color="#8a8a8a"/></linearGradient>
<linearGradient id="stk1" x1="481" y1="0" x2="510" y2="0" gradientUnits="userSpaceOnUse"><stop offset="0" stop-color="#6c6c6c"/><stop offset=".12" stop-color="#a4a4a4"/><stop offset=".3" stop-color="#c6c6c6"/><stop offset=".55" stop-color="#b0b0b0"/><stop offset=".8" stop-color="#949494"/><stop offset="1" stop-color="#707070"/></linearGradient>
<linearGradient id="stk2" x1="590" y1="0" x2="613" y2="0" gradientUnits="userSpaceOnUse"><stop offset="0" stop-color="#6a6a6a"/><stop offset=".15" stop-color="#a4a4a4"/><stop offset=".4" stop-color="#cacaca"/><stop offset=".6" stop-color="#b2b2b2"/><stop offset=".82" stop-color="#8c8c8c"/><stop offset="1" stop-color="#5c5c5c"/></linearGradient>
<linearGradient id="elb1" x1="486" y1="275" x2="514" y2="300" gradientUnits="userSpaceOnUse"><stop offset="0" stop-color="#3c3c3c"/><stop offset=".45" stop-color="#6a6a6a"/><stop offset="1" stop-color="#9a9a9a"/></linearGradient>
<linearGradient id="elb2" x1="598" y1="248" x2="614.500" y2="262" gradientUnits="userSpaceOnUse"><stop offset="0" stop-color="#6a6a6a"/><stop offset=".15" stop-color="#a0a0a0"/><stop offset=".4" stop-color="#cccccc"/><stop offset=".6" stop-color="#b4b4b4"/><stop offset=".8" stop-color="#8c8c8c"/><stop offset="1" stop-color="#5a5a5a"/></linearGradient>
<linearGradient id="redl" x1="0" y1="0" x2="1" y2="0"><stop offset="0" stop-color="#6a0000"/><stop offset=".35" stop-color="#a80808"/><stop offset=".5" stop-color="#e01010"/><stop offset=".65" stop-color="#a80808"/><stop offset="1" stop-color="#6a0000"/></linearGradient>
<linearGradient id="rackg" x1="440" y1="260" x2="600" y2="225" gradientUnits="userSpaceOnUse"><stop offset="0" stop-color="#8e8e8e"/><stop offset=".3" stop-color="#7c7c7c"/><stop offset="1" stop-color="#767676"/></linearGradient>
<linearGradient id="slotg" x1="578" y1="229" x2="595" y2="250" gradientUnits="userSpaceOnUse"><stop offset="0" stop-color="#0c0c0c"/><stop offset=".6" stop-color="#2c2c2c"/><stop offset="1" stop-color="#6a6a6a"/></linearGradient>
</defs>
<!-- cab roof -->
<path d="M330 276L352 264L375 255L420 245L450 241L488 241L455 256L432 268L416 286L332 277.500Z" fill="url(#roofg)"/>
<path d="M332 277.500L416 285.500" stroke="#222" stroke-width="1" stroke-dasharray="16 5" fill="none"/>
<path d="M313 289L331 276" stroke="#ddd" stroke-width="1" fill="none"/>
<!-- rack outer body -->
<path d="M435 264C450 254 470 247 490 242.500L550 226L565 221.500Q575 220 582 222.500Q590 226 594 236L599 248L599 275L589 275L589 352L475 416L422.500 441L422.500 455L408 462L404 410L401 350L400 322Q402 300 412 288Q420 274 435 264Z" fill="url(#rackg)"/>
<!-- dark inner top band under arch (right side) -->
<path d="M576 228.500Q585 230 589.500 238L596.500 248L593 251.500L585 241Q581 234 576 228.500Z" fill="url(#slotg)"/>
<!-- left post light band -->
<path d="M435 264Q420 274 412 288Q402 300 400 322L401 350L404 410L408 462L422.500 455L417.500 410L412.500 345L415 310Q418 296 426 285Q436 270 452 260Z" fill="url(#postg)"/>
<path d="M435 264Q445 257 460 252L490 242.500L488 246L466 254Q452 260 445 266Q436 273 430 282L426 285Q420 274 435 264Z" fill="url(#postg2)" opacity=".9"/>
<!-- bottom band darker -->
<path d="M422.500 440L475 415L511 392L549 370L589 352L589 360L450 451L422.500 455Z" fill="#6c6c6c"/>
<path d="M422.500 446L475 421L511 398L549 376L589 357" stroke="#787878" stroke-width="2" fill="none"/>
<!-- panels -->
<path d="M418 343L469 324L475 415L422.500 440Z" fill="#9c9c9c"/>
<path d="M514 304L546 291L549 370L511 391Z" fill="#9a9a9a"/>
<path d="M557.500 290L589 274L589 352.500L557.500 366Z" fill="#989898"/>
<!-- gussets -->
<path d="M466 283L473 281L479 340L477 413L472 410L471 340Z" fill="#bcbcbc"/><path d="M473 281L479 340L477 413L481 411L482 340Z" fill="#8a8a8a"/>
<path d="M546 256L552.500 255L556 292L552 370L549 370L549 292Z" fill="#c0c0c0"/><path d="M552.500 255L556 292L552 370L556 368L558 292Z" fill="#8a8a8a"/>
<!-- dotted line -->
<path d="M425 306L542.500 256" stroke="#1a1a1a" stroke-width="1" stroke-dasharray="1.500 2" fill="none"/>
<!-- red lights -->
<g transform="rotate(-20 432 325)"><rect x="421" y="319" width="22" height="12" rx="5.500" fill="#d8d8d8"/><rect x="423" y="320.500" width="18" height="9" rx="4.500" fill="url(#redl)"/></g>
<g transform="rotate(-20 457 315)"><rect x="446" y="309" width="22" height="12" rx="5.500" fill="#d8d8d8"/><rect x="448" y="310.500" width="18" height="9" rx="4.500" fill="url(#redl)"/></g>
<g transform="rotate(-22 566 272)"><rect x="558.500" y="267" width="15" height="10" rx="4.500" fill="#d8d8d8"/><rect x="560" y="268.500" width="12" height="7" rx="3.500" fill="url(#redl)"/></g>
<g transform="rotate(-22 582 265)"><rect x="574.500" y="260" width="15" height="10" rx="4.500" fill="#d8d8d8"/><rect x="576" y="261.500" width="12" height="7" rx="3.500" fill="url(#redl)"/></g>
<!-- stack 2 (rear) -->
<path d="M590 271L613 271L613 372Q601.500 376 590 372Z" fill="url(#stk2)"/>
<path d="M590 274Q590 262 594.500 256.600L622.200 223.200L625.200 226.700L625.700 249.500L613.500 270L613 276Z" fill="url(#elb2)"/>
<path d="M625.200 226.700L625.700 249.500L613.500 270L613 276L613 372" stroke="#2a2a2a" stroke-width="1" fill="none"/>
<path d="M590 372L590 274Q590 262 594.500 256.600L622.200 223.200" stroke="#555" stroke-width="1" fill="none"/>
<!-- stack 1 (front) -->
<path d="M481 305L509 305L509 437Q495 442 481 437Z" fill="url(#stk1)"/>
<path d="M509 312L509 437" stroke="#3a3a3a" stroke-width="1.200" fill="none"/>
<path d="M481 318Q481 296 486 290Q484 272 492 266Q500 262 508 270Q514 278 514 298L509 312Q496 320 481 312Z" fill="url(#elb1)"/>
<path d="M481 312Q496 320 509 310L509 318Q496 326 481 319Z" fill="#8c8c8c"/>
<path d="M486 290Q484 272 492 266Q500 262 506 268Q496 270 492 280Q489 288 490 296Z" fill="#3a3a3a" opacity=".8"/>
<!-- cab lights -->
<path d="M331 275L340 266L353 268L346 273Z" fill="#f08818"/><path d="M331 275L346 273L353 268L354 269.500L346 274.500L331 276.500Z" fill="#111"/>
<path d="M368 257L374 251L383 252L378 256.500Z" fill="#f8e010"/><path d="M368 257L378 256.500L383 252L384 253.500L378 258L368 258.500Z" fill="#111"/>
<path d="M386 252L392 247L400 248L395 251.500Z" fill="#f8e010"/><path d="M386 252L395 251.500L400 248L401 249.500L395 253L386 253.500Z" fill="#111"/>
<path d="M401 248L407 243.500L416 244L411 247.500Z" fill="#f8e010"/><path d="M401 248L411 247.500L416 244L417 245.500L411 249L401 249.500Z" fill="#111"/>
<path d="M449 241L456 235L467.500 237L462 240.500Z" fill="#f09018"/><path d="M449 241L462 240.500L467.500 237L468.500 238.500L462 242L449 242.500Z" fill="#111"/>

<!-- FRONT WHEEL -->
<path d="M133 457C133 440 138 428 147 420.500C155 414 165 411 175 411.500L200 413C215 416 226 428 233 442.500C243 460 250 476 250 489C250 500 249 506 247 510C241 520 234 525 225 528C214 533 204 536 194 536C184 534 176 529 170 524C160 516 152 507 147 497C140 486 134 472 133 457Z" fill="#1c1c1c"/>
<path d="M200 413C215 416 226 428 233 442.500C243 460 250 476 250 489C250 500 249 506 247 510C241 520 234 525 225 528C236 515 240 500 238 484C235 460 222 432 200 413Z" fill="#262626"/>
<ellipse cx="181" cy="475" rx="45" ry="60" transform="rotate(-14 181 475)" fill="url(#tireF)"/>
<ellipse cx="179" cy="478" rx="33" ry="44" transform="rotate(-16 179 478)" fill="#0c0c0c"/>
<ellipse cx="177.500" cy="478.500" rx="26" ry="35.500" transform="rotate(-17 177.500 478.500)" fill="url(#rimg)" stroke="#f4f4f4" stroke-width="1"/>
<ellipse cx="177.500" cy="478.500" rx="26" ry="35.500" transform="rotate(-17 177.500 478.500)" fill="url(#rimsh)"/>
<ellipse cx="174" cy="479" rx="17" ry="23" transform="rotate(-17 174 479)" fill="#d4d4d4" stroke="#777" stroke-width=".8"/>
<ellipse cx="174" cy="479" rx="13" ry="18.500" transform="rotate(-17 174 479)" fill="none" stroke="#222" stroke-width="3" stroke-dasharray="2.500 3.500"/>
<ellipse cx="173" cy="480" rx="9.500" ry="13" transform="rotate(-17 173 480)" fill="#1a1a1a"/>
<ellipse cx="172.500" cy="480" rx="7" ry="9.500" transform="rotate(-17 172.500 480)" fill="#fff"/>
<ellipse cx="173.500" cy="450.500" rx="4.500" ry="4" fill="#1a1a1a"/><ellipse cx="199" cy="484" rx="3.500" ry="5" fill="#2a2a2a"/>
<!-- markers -->
<g fill="#0000f0">
<path d="M101 380l2 -1.500h4l1.500 1.500v4l-1.500 1.500h-4l-2 -1.500z"/><path d="M115 441l2 -1.500h5l1.500 1.500v5l-1.500 1.500h-5l-2 -1.500z"/>
<path d="M340 322l2 -1.500h5l1.500 1.500v5l-1.500 1.500h-5l-2 -1.500z"/>
<rect x="937" y="470" width="8" height="8"/><rect x="932" y="478" width="9" height="9"/><rect x="881" y="594" width="8" height="9"/><rect x="876" y="608" width="12" height="12"/><rect x="947" y="575.500" width="4" height="4.500"/>
</g>
<path d="M344 329v14" stroke="#333" stroke-width="1" fill="none"/>
<ellipse cx="229.500" cy="417.500" rx="2.800" ry="3.600" fill="#00a000"/>
<!-- axis gizmo -->
<g fill="none" stroke-width="1"><path d="M21.500 866.500V853" stroke="#008000"/><path d="M21.500 866.500L12.500 874" stroke="#e00000"/><path d="M21.500 866.500L38 870.500" stroke="#0000e0"/></g>
<g font-family="Liberation Sans" font-weight="700" font-size="9"><text x="18.500" y="851" fill="#008000">y</text><text x="8" y="879.500" fill="#e00000">x</text><text x="38.500" y="874.500" fill="#0000e0">z</text></g>

</svg>
<svg class="a" style="left:0;top:0" width="1280" height="1024" shape-rendering="crispEdges">
<!-- viewport header -->
<rect x="1" y="67" width="1067" height="1" fill="#999"/><rect x="1" y="67" width="1" height="818" fill="#999"/>
<rect x="2" y="68" width="1066" height="1" fill="#fff"/><rect x="2" y="68" width="1" height="24" fill="#fff"/>
<rect x="3" y="91" width="1064" height="2" fill="#8a8a8a"/>
<rect x="4.500" y="70.500" width="27" height="20" fill="none" stroke="#fff"/><rect x="5.500" y="71.500" width="25" height="18" fill="none" stroke="#9c9c9c"/><path d="M5.500 89.500v-18h25" fill="none" stroke="#e8e8e8"/>
<path d="M34.500 90.500v-20h962" fill="none" stroke="#a4a4a4"/><path d="M34.500 90.500h962v-20" fill="none" stroke="#fff"/>
<path d="M999.500 90.500v-20h49" fill="none" stroke="#a4a4a4"/><path d="M999.500 90.500h49v-20" fill="none" stroke="#fff"/>
<path d="M1051.500 90.500v-20h13" fill="none" stroke="#a4a4a4"/><path d="M1051.500 90.500h13v-20" fill="none" stroke="#fff"/>
<!-- viewport right border & right panel frame -->
<rect x="1067" y="92" width="1" height="793" fill="#e6e6e6"/>
<rect x="1068" y="67" width="1" height="896" fill="#fff"/>
<rect x="1072" y="68" width="1" height="894" fill="#a0a0a0"/>
<rect x="1069" y="67" width="211" height="1" fill="#fff"/>
<rect x="1078" y="72" width="184" height="1" fill="#fff"/><rect x="1078" y="76" width="184" height="1" fill="#fff"/>
<rect x="1078" y="73" width="185" height="1" fill="#8c8c8c"/><rect x="1078" y="77" width="185" height="1" fill="#8c8c8c"/>
<!-- splitter -->
<rect x="1069" y="515" width="211" height="1" fill="#fff"/>
<path d="M1075.500 518.500v-8h200v8" fill="none" stroke="#fff"/><rect x="1075" y="519" width="202" height="1" fill="#999"/>
<rect x="1075" y="523" width="187" height="1" fill="#fff"/><rect x="1075" y="527" width="187" height="1" fill="#fff"/>
<rect x="1075" y="524" width="188" height="1" fill="#8c8c8c"/><rect x="1075" y="528" width="188" height="1" fill="#8c8c8c"/>
<!-- scrollbar -->
<path d="M1266.500 93.500v-11h11" fill="none" stroke="#fff"/><path d="M1266.500 93.500h11v-11" fill="none" stroke="#999"/>
<path d="M1268 90h8l-4 -4.500z" fill="#000" shape-rendering="auto"/>
<path d="M1266.500 496.500v-402h11" fill="none" stroke="#fff"/><path d="M1277.500 94.500v402" fill="none" stroke="#999"/>
<path d="M1266.500 508.500v-11h11" fill="none" stroke="#fff"/><path d="M1266.500 508.500h11v-11" fill="none" stroke="#999"/>
<path d="M1268 501h8l-4 4.500z" fill="#000" shape-rendering="auto"/>
<path d="M1269 292.500h6M1269 294.500h6M1269 296.500h6M1269 298.500h6" stroke="#000"/>
<!-- modify highlight -->
<defs><linearGradient id="mh" x1="0" x2="1"><stop offset="0" stop-color="#b4c4d8"/><stop offset=".5" stop-color="#ccdaea"/><stop offset="1" stop-color="#d8e4f0"/></linearGradient></defs>
<rect x="1078" y="119" width="182" height="15" fill="url(#mh)"/><rect x="1078" y="134" width="183" height="1" fill="#fff"/><rect x="1260" y="119" width="1" height="16" fill="#fff"/>
<!-- tree frame -->
<rect x="1074" y="533" width="204" height="1" fill="#707a88"/><rect x="1074" y="533" width="1" height="407" fill="#707a88"/>
<!-- show/hide frames -->
<path d="M1076.500 960.500v-19h98" fill="none" stroke="#a4a4a4"/><path d="M1076.500 960.500h98v-19" fill="none" stroke="#fff"/>
<path d="M1177.500 960.500v-19h99" fill="none" stroke="#a4a4a4"/><path d="M1177.500 960.500h99v-19" fill="none" stroke="#fff"/>
<!-- bottom -->
<rect x="0" y="884" width="1068" height="1" fill="#e0e0e0"/><rect x="0" y="885" width="1068" height="1" fill="#9a9a9a"/>
<rect x="0" y="887" width="1068" height="1" fill="#9a9a9a"/>
<rect x="4" y="903" width="1" height="56" fill="#fff"/><rect x="8" y="903" width="1" height="56" fill="#fff"/><rect x="5" y="903" width="1" height="57" fill="#8c8c8c"/><rect x="9" y="903" width="1" height="57" fill="#8c8c8c"/>
<rect x="14" y="889" width="1" height="72" fill="#707070"/><rect x="14" y="889" width="1054" height="1" fill="#707070"/>
<rect x="14" y="960" width="1054" height="1" fill="#e6e6e6"/>
<rect x="0" y="964" width="1280" height="1" fill="#fff"/><rect x="0" y="963" width="1280" height="1" fill="#999"/>
<rect x="0" y="966" width="4" height="18" fill="#fff"/><rect x="5" y="966" width="2" height="18" fill="#fff"/>
<!-- status -->
<path d="M1074.500 983.500v-16h188" fill="none" stroke="#6c6c6c"/><path d="M1074.500 983.500h188v-16" fill="none" stroke="#fff"/>
<rect x="928.500" y="967.500" width="103" height="16" fill="#802000" stroke="#fff"/>
<rect x="1035.500" y="967.500" width="35" height="16" fill="#808080" stroke="#fff"/>
</svg>
<!--RIGHT-->
<div class="a" id="tree"></div>
<div class="a" style="left:1092px;top:575px;width:184px;height:20px;background:#4e92d8;border:1px dotted #000"></div>
<svg class="a" style="left:1094px;top:537px" width="14" height="15"><defs><linearGradient id="ck540" x1="0" y1="0" x2="1" y2="1"><stop offset="0" stop-color="#d8d8d8"/><stop offset="1" stop-color="#fff"/></linearGradient></defs><rect x=".5" y="3.500" width="10" height="10" fill="url(#ck540)" stroke="#8e8f8f"/><path d="M2.500 7.500l2.500 4l5.500 -10.500" fill="none" stroke="#1a3fd0" stroke-width="1.800"/></svg><svg class="a" style="left:1094px;top:557px" width="14" height="15"><defs><linearGradient id="ck560" x1="0" y1="0" x2="1" y2="1"><stop offset="0" stop-color="#d8d8d8"/><stop offset="1" stop-color="#fff"/></linearGradient></defs><rect x=".5" y="3.500" width="10" height="10" fill="url(#ck560)" stroke="#8e8f8f"/><path d="M2.500 7.500l2.500 4l5.500 -10.500" fill="none" stroke="#1a3fd0" stroke-width="1.800"/></svg><svg class="a" style="left:1094px;top:577px" width="14" height="15"><defs><linearGradient id="ck580" x1="0" y1="0" x2="1" y2="1"><stop offset="0" stop-color="#d8d8d8"/><stop offset="1" stop-color="#fff"/></linearGradient></defs><rect x=".5" y="3.500" width="10" height="10" fill="url(#ck580)" stroke="#8e8f8f"/><path d="M2.500 7.500l2.500 4l5.500 -10.500" fill="none" stroke="#1a3fd0" stroke-width="1.800"/></svg>
<div class="t" style="left:1110px;top:538px;font-size:12px;color:#000">default</div>
<div class="t" style="left:1110px;top:558px;font-size:12px;color:#000;transform:scaleX(.895)">stacks1</div>
<div class="t" style="left:1110px;top:578px;font-size:12px;color:#fff;transform:scaleX(1.03)">bobcat.wft</div>
<svg class="a" style="left:1079px;top:580px" width="9" height="9" shape-rendering="crispEdges"><rect x=".5" y=".5" width="8" height="8" fill="#fff" stroke="#909090"/><path d="M2 4.500h5M4.500 2v5" stroke="#000"/></svg>
<div class="a" style="left:1079px;top:944px;width:94px;height:15px;border:1px solid #3cc2ee;border-radius:3px;background:linear-gradient(#e8f2f8,#dce8f0 45%,#c8d8e4 50%,#d4e0ea)"></div>
<div class="a" style="left:1180px;top:944px;width:94px;height:15px;border:1px solid #8a8a8a;border-radius:3px;background:linear-gradient(#f4f4f4,#ebebeb 45%,#dcdcdc 50%,#d0d0d0)"></div>
<div class="t" style="left:1106px;top:945px;font-size:12px;color:#000;transform:scaleX(.89)">Show all</div>
<div class="t" style="left:1209px;top:945px;font-size:12px;color:#000;transform:scaleX(.89)">Hide all</div>
<div class="t" style="left:934px;top:969px;font-size:12px;font-weight:700;color:#fff;transform:scaleX(.885)">SELECTED MODE</div>
<div class="t" style="left:1040px;top:969px;font-size:12px;font-weight:700;color:#fff;transform:scaleX(1.0)">Auto</div>
<div class="t" style="left:1077px;top:969px;font-size:12px;color:#151515;transform:scaleX(.879)">Cursor: -0.73061, -0.36237, -0.02182</div>
<div class="t" style="left:10px;top:76px;font-size:12px;font-weight:700;color:#151515;transform:scaleX(.97)">3D</div>
<div class="t" style="left:40px;top:73px;font-size:12px;color:#151515">&lt;</div>
<div class="t" style="left:56px;top:73px;font-size:12px;color:#151515;transform:scaleX(.94)">Display</div>
<div class="t" style="left:1083px;top:87px;font-size:12px;color:#151515;transform:scaleX(0.9155)">Create...</div>
<div class="t" style="left:1083px;top:104px;font-size:12px;color:#151515;transform:scaleX(0.966)">Display...</div>
<div class="t" style="left:1083px;top:121px;font-size:12px;color:#5c6880;transform:scaleX(1.053)">Modify...</div>
<div class="t" style="left:1093px;top:138px;font-size:12px;color:#151515;transform:scaleX(1.009)">Align...</div>
<div class="t" style="left:1093px;top:155px;font-size:12px;color:#151515;transform:scaleX(1.014)">Attach</div>
<div class="t" style="left:1093px;top:172px;font-size:12px;color:#151515;transform:scaleX(0.93)">Break</div>
<div class="t" style="left:1093px;top:189px;font-size:12px;color:#151515;transform:scaleX(0.978)">Connect</div>
<div class="t" style="left:1093px;top:206px;font-size:12px;color:#151515;transform:scaleX(0.972)">Delete</div>
<div class="t" style="left:1093px;top:223px;font-size:12px;color:#151515;transform:scaleX(0.955)">Exact Transform</div>
<div class="t" style="left:1093px;top:240px;font-size:12px;color:#151515;transform:scaleX(0.868)">FFD</div>
<div class="t" style="left:1093px;top:257px;font-size:12px;color:#151515;transform:scaleX(0.987)">Flip</div>
<div class="t" style="left:1093px;top:274px;font-size:12px;color:#151515;transform:scaleX(0.978)">Insert</div>
<div class="t" style="left:1093px;top:291px;font-size:12px;color:#151515;transform:scaleX(1.056)">Mirror</div>
<div class="t" style="left:1093px;top:308px;font-size:12px;color:#151515;transform:scaleX(1.04)">Move</div>
<div class="t" style="left:1093px;top:325px;font-size:12px;color:#151515;transform:scaleX(0.97)">Rotate</div>
<div class="t" style="left:1093px;top:342px;font-size:12px;color:#151515;transform:scaleX(0.918)">Scale</div>
<div class="t" style="left:1093px;top:359px;font-size:12px;color:#151515;transform:scaleX(0.938)">Submesh...</div>
<div class="t" style="left:1083px;top:376px;font-size:12px;color:#151515;transform:scaleX(0.925)">Select...</div>
<div class="t" style="left:1083px;top:393px;font-size:12px;color:#151515;transform:scaleX(0.928)">Surface...</div>
<div class="cb" style="top:155px"></div>
<div class="cb" style="top:206px"></div>
<div class="cb" style="top:240px"></div>
<div class="cb" style="top:274px"></div>
<div class="cb" style="top:291px"></div>
<div class="cb" style="top:308px"></div>
<div class="cb" style="top:325px"></div>
<div class="cb" style="top:342px"></div>
<svg class="a" style="left:1266px;top:70px" width="12" height="11"><defs><linearGradient id="rx126670" x1="0" y1="0" x2="1" y2="1"><stop offset="0" stop-color="#ff8080"/><stop offset=".4" stop-color="#e81818"/><stop offset="1" stop-color="#a00000"/></linearGradient></defs><rect x="0" y="0" width="12" height="11" fill="url(#rx126670)"/><path d="M0 10.500h12M11.500 0v11" stroke="#800000"/><path d="M.5 10v-9.500h11" stroke="#ffa0a0" fill="none"/><path d="M3 2.500l6 6m0 -6l-6 6" stroke="#300" stroke-width="2.600"/><path d="M3 2.500l6 6m0 -6l-6 6" stroke="#fff" stroke-width="1.500"/></svg><svg class="a" style="left:1266px;top:520px" width="12" height="11"><defs><linearGradient id="rx1266520" x1="0" y1="0" x2="1" y2="1"><stop offset="0" stop-color="#ff8080"/><stop offset=".4" stop-color="#e81818"/><stop offset="1" stop-color="#a00000"/></linearGradient></defs><rect x="0" y="0" width="12" height="11" fill="url(#rx1266520)"/><path d="M0 10.500h12M11.500 0v11" stroke="#800000"/><path d="M.5 10v-9.500h11" stroke="#ffa0a0" fill="none"/><path d="M3 2.500l6 6m0 -6l-6 6" stroke="#300" stroke-width="2.600"/><path d="M3 2.500l6 6m0 -6l-6 6" stroke="#fff" stroke-width="1.500"/></svg><svg class="a" style="left:1px;top:888px" width="12" height="11"><defs><linearGradient id="rx1888" x1="0" y1="0" x2="1" y2="1"><stop offset="0" stop-color="#ff8080"/><stop offset=".4" stop-color="#e81818"/><stop offset="1" stop-color="#a00000"/></linearGradient></defs><rect x="0" y="0" width="12" height="11" fill="url(#rx1888)"/><path d="M0 10.500h12M11.500 0v11" stroke="#800000"/><path d="M.5 10v-9.500h11" stroke="#ffa0a0" fill="none"/><path d="M3 2.500l6 6m0 -6l-6 6" stroke="#300" stroke-width="2.600"/><path d="M3 2.500l6 6m0 -6l-6 6" stroke="#fff" stroke-width="1.500"/></svg>
<svg class="a" style="left:998px;top:69px" width="70" height="23">
<defs><radialGradient id="mg" cx=".4" cy=".4" r=".6"><stop offset="0" stop-color="#f4f4f4"/><stop offset="1" stop-color="#b8b8b8"/></radialGradient>
<linearGradient id="rq" x1="0" y1="0" x2="1" y2="1"><stop offset="0" stop-color="#ffd0d0"/><stop offset="1" stop-color="#ff9090"/></linearGradient></defs>
<!-- magnifier -->
<path d="M11 12l5 4.500" stroke="#111" stroke-width="2"/><circle cx="8.500" cy="9.500" r="4" fill="url(#mg)" stroke="#888" stroke-width=".8"/>
<!-- hand -->
<path d="M22 10l1.500 -2l1.500 2v-4.500h1.500v4v-5h1.500v5v-4.500h1.500v5l1 -3h1.300l-1 5c-.5 2 -1 3 -1.500 4h-5c-1 -1.500 -2.500 -4 -3.300 -6z" fill="#e4e4e4" stroke="#9a9a9a" stroke-width=".6"/>
<!-- zoom region -->
<path d="M36.500 8v-3.500h3M47.500 8v-3.500h-3M36.500 13v3.500h3M47.500 13v3.500h-3" fill="none" stroke="#000" stroke-width="1.300"/><circle cx="39" cy="9" r="2" fill="#999"/><rect x="40" y="10" width="7" height="6" fill="#e0e0e0"/>
<!-- red box -->
<rect x="55" y="7" width="10" height="10" fill="url(#rq)" stroke="#e80000" stroke-width="1.800"/><path d="M56 17v-9.500h9" fill="none" stroke="#200000" stroke-width="1.200"/><path d="M54 18.500h12" stroke="#900000" stroke-width="1"/>
</svg>
<!-- resize grip -->
<svg class="a" style="left:1264px;top:969px" width="16" height="16" shape-rendering="crispEdges"><rect x="11" y="1" width="3" height="3" fill="#fff"/><rect x="11" y="1" width="2" height="2" fill="#6c6c6c"/><rect x="6" y="6" width="3" height="3" fill="#fff"/><rect x="6" y="6" width="2" height="2" fill="#6c6c6c"/><rect x="11" y="6" width="3" height="3" fill="#fff"/><rect x="11" y="6" width="2" height="2" fill="#6c6c6c"/><rect x="1" y="11" width="3" height="3" fill="#fff"/><rect x="1" y="11" width="2" height="2" fill="#6c6c6c"/><rect x="6" y="11" width="3" height="3" fill="#fff"/><rect x="6" y="11" width="2" height="2" fill="#6c6c6c"/><rect x="11" y="11" width="3" height="3" fill="#fff"/><rect x="11" y="11" width="2" height="2" fill="#6c6c6c"/></svg>
<!--BOTTOM-->
<div class="a" id="msg"></div>
<!--TASKBAR-->
<div class="a" id="task">
<svg class="a" style="left:0;top:0" width="1280" height="40" viewBox="0 0 1280 38" preserveAspectRatio="none">
<defs><filter id="b2"><feGaussianBlur stdDeviation="1.500"/></filter><filter id="b4"><feGaussianBlur stdDeviation="4"/></filter>
<linearGradient id="lf" x1="0" x2="1"><stop offset="0" stop-color="#050505"/><stop offset=".7" stop-color="#0a0a0a" stop-opacity=".95"/><stop offset="1" stop-color="#111" stop-opacity="0"/></linearGradient>
<linearGradient id="lf2" x1="0" x2="1"><stop offset="0" stop-color="#000" stop-opacity="0"/><stop offset=".55" stop-color="#000" stop-opacity="0"/><stop offset="1" stop-color="#1a1a16" stop-opacity="0"/></linearGradient><linearGradient id="rf" x1="0" x2="1"><stop offset="0" stop-color="#080808" stop-opacity="0"/><stop offset=".35" stop-color="#080808" stop-opacity=".95"/><stop offset="1" stop-color="#060606"/></linearGradient>
<linearGradient id="gl" x1="0" y1="0" x2="0" y2="1"><stop offset="0" stop-color="#fff" stop-opacity=".26"/><stop offset=".42" stop-color="#fff" stop-opacity=".12"/><stop offset=".46" stop-color="#000" stop-opacity=".30"/><stop offset="1" stop-color="#000" stop-opacity=".34"/></linearGradient></defs>
<rect width="1280" height="38" fill="#34342c"/>
<g filter="url(#b2)">
<path d="M465 0h110l-30 10l-60 8l-20 6z" fill="#55554a"/>
<path d="M476 3l40 -3l22 6l-26 10z" fill="#7c8654"/>
<path d="M465 20h90l30 18h-120z" fill="#1c1c16"/>
<path d="M516 22l22 8l-3 4l-22 -8z" fill="#9a927a"/>
<path d="M556 38l6 -14l16 -8l18 2l-14 12l-16 8z" fill="#446e2c"/>
<path d="M574 24l18 -6l12 6l-16 8z" fill="#3a6426"/>
<path d="M600 0h100l-10 12l-50 8l-40 -8z" fill="#8a8a82"/>
<path d="M612 6l34 -4l18 10l-28 6z" fill="#b0b0a8"/>
<path d="M634 38l4 -12l22 -10l12 6l-14 12l-10 4z" fill="#4e8630"/>
<path d="M690 18l16 -18l34 -1l14 12l-12 16l-24 -6z" fill="#467a2c"/>
<path d="M706 2l26 -2l14 10l-18 8z" fill="#5a8e38"/>
<path d="M670 22h70l20 16h-100z" fill="#55554c"/>
<path d="M745 0h320v18l-60 -2l-120 4l-130 -6z" fill="#7c7c74"/>
<path d="M640 24l110 0l20 14h-140z" fill="#22221c"/>
<path d="M770 38l12 -10l22 -6l18 5l24 -3l14 14z" fill="#a88660"/>
<path d="M800 25l18 -2l14 9l-18 5z" fill="#b89468"/>
<path d="M860 20l100 2l100 -4v20h-200z" fill="#5c5c52"/>
<path d="M880 6l30 -6h40l-10 12l-40 4z" fill="#4c4c44"/>
<path d="M870 16l50 -2l30 6l-20 12l-50 2z" fill="#34342e"/>
<path d="M960 0h16v38h-12zM1000 0h12v38h-9zM1030 0h8v38h-6z" fill="#9a9a92" opacity=".5"/>
</g>
<text x="871" y="20" font-family="Liberation Sans" font-weight="700" font-style="italic" font-size="11" fill="#1a1a16" transform="translate(871 0) scale(1.250 1) translate(-871 0)">MOSSY OAK</text>
<text x="885" y="33" font-family="Liberation Serif" font-style="italic" font-size="14" fill="#1a1a16">Obsession</text>
<rect x="95" y="0" width="375" height="38" fill="#1a1a16" opacity=".55"/>
<rect width="1280" height="38" fill="url(#gl)"/>
<rect x="0" y="0" width="165" height="38" fill="url(#lf)"/><rect x="0" y="0" width="165" height="17" fill="#fff" opacity=".2"/><rect x="0" y="0" width="165" height="38" fill="url(#lf2)"/>
<rect x="1030" y="0" width="250" height="38" fill="url(#rf)"/>

<rect x="0" y="0" width="1280" height="1" fill="#b0b0b0" opacity=".6"/>
<rect x="1251" y="0" width="1" height="38" fill="#555"/><rect x="1252" y="0" width="28" height="38" fill="#141414" opacity=".9"/><rect x="1252" y="0" width="28" height="16" fill="#3a3a3a" opacity=".8"/>
<!-- tray -->
<path d="M1087 22h10l-5 -5z" fill="#fff"/>
<g transform="translate(-4 0)" fill="none" stroke="#fff" stroke-width="1.300"><rect x="1118.500" y="15.500" width="10" height="7"/><path d="M1120 25.500h7M1123.500 22.500v3"/><path d="M1116.500 13v11M1114.500 13.500h4" /></g>
<path d="M1135 17h3l4 -4v13l-4 -4h-3z" fill="#fff"/><path d="M1144 16.500c1.500 1.500 1.500 4.500 0 6M1146.500 14.500c2.500 2.500 2.500 8 0 10.500" fill="none" stroke="#fff" stroke-width="1.100"/>
</svg>
<div class="a" style="left:96px;top:0;width:58px;height:39px;border:1px solid rgba(20,20,20,.9);border-radius:3px;box-shadow:inset 0 0 0 1px rgba(255,255,255,.45);background:linear-gradient(rgba(255,255,255,.36),rgba(255,255,255,.26) 46%,rgba(0,0,0,.25) 50%,rgba(0,0,0,.25))"></div><div class="a" style="left:158px;top:0;width:58px;height:39px;border:1px solid rgba(20,20,20,.9);border-radius:3px;box-shadow:inset 0 0 0 1px rgba(255,255,255,.45);background:linear-gradient(rgba(255,255,255,.55),rgba(255,255,255,.45) 46%,rgba(200,200,200,.34) 50%,rgba(200,200,200,.38))"></div><div class="a" style="left:220px;top:0;width:58px;height:39px;border:1px solid rgba(20,20,20,.9);border-radius:3px;box-shadow:inset 0 0 0 1px rgba(255,255,255,.45);background:linear-gradient(rgba(255,255,255,.36),rgba(255,255,255,.26) 46%,rgba(0,0,0,.25) 50%,rgba(0,0,0,.25))"></div><div class="a" style="left:282px;top:0;width:55px;height:39px;border:1px solid rgba(20,20,20,.9);border-radius:3px;box-shadow:inset 0 0 0 1px rgba(255,255,255,.45);background:linear-gradient(rgba(255,255,255,.36),rgba(255,255,255,.26) 46%,rgba(0,0,0,.25) 50%,rgba(0,0,0,.25))"></div><div class="a" style="left:337px;top:0;width:4px;height:39px;border:1px solid rgba(20,20,20,.9);border-left:0;box-shadow:inset -1px 0 0 0 rgba(255,255,255,.4)"></div><div class="a" style="left:344px;top:0;width:55px;height:39px;border:1px solid rgba(20,20,20,.9);border-radius:3px;box-shadow:inset 0 0 0 1px rgba(255,255,255,.45);background:linear-gradient(rgba(255,255,255,.36),rgba(255,255,255,.26) 46%,rgba(0,0,0,.25) 50%,rgba(0,0,0,.25))"></div><div class="a" style="left:399px;top:0;width:4px;height:39px;border:1px solid rgba(20,20,20,.9);border-left:0;box-shadow:inset -1px 0 0 0 rgba(255,255,255,.4)"></div><div class="a" style="left:406px;top:0;width:58px;height:39px;border:1px solid rgba(20,20,20,.9);border-radius:3px;box-shadow:inset 0 0 0 1px rgba(255,255,255,.45);background:linear-gradient(rgba(255,255,255,.36),rgba(255,255,255,.26) 46%,rgba(0,0,0,.25) 50%,rgba(0,0,0,.25))"></div>
<svg class="a" style="left:0;top:1px" width="480" height="39">
<defs>
<radialGradient id="cb1" cx=".5" cy=".4" r=".6"><stop offset="0" stop-color="#8fc4f0"/><stop offset="1" stop-color="#2f78c8"/></radialGradient>
<linearGradient id="fd" x1="0" y1="0" x2="0" y2="1"><stop offset="0" stop-color="#fbeaa0"/><stop offset="1" stop-color="#e4c860"/></linearGradient>
<linearGradient id="fb" x1="0" y1="0" x2="0" y2="1"><stop offset="0" stop-color="#a8dcf4"/><stop offset="1" stop-color="#3c98d4"/></linearGradient>
<linearGradient id="mx" x1="0" y1="0" x2="1" y2="1"><stop offset="0" stop-color="#1a8a88"/><stop offset="1" stop-color="#064848"/></linearGradient>
<radialGradient id="mg1" cx=".4" cy=".3" r=".7"><stop offset="0" stop-color="#a8e080"/><stop offset="1" stop-color="#3c8c28"/></radialGradient>
<radialGradient id="mb1" cx=".4" cy=".3" r=".7"><stop offset="0" stop-color="#a8d8f8"/><stop offset="1" stop-color="#2c78c0"/></radialGradient>
</defs>
<!-- start logo -->
<ellipse cx="26" cy="13.500" rx="12.700" ry="12.500" fill="#1c1a18" stroke="#8a8a70" stroke-width="1"/>
<path d="M26 1.500a12 12 0 0 0 0 24c2 -4 3 -8 2 -12c1 -4 0 -8 -2 -12z" fill="#cfc8a8"/>
<path d="M23 3.500c-3 3 -4 8 -3 12l2 1v5h2v-5c3 -2 4 -8 2 -12c-1 -1 -2 -1.500 -3 -1z" fill="#2c6a30"/>
<text x="5.500" y="38" font-family="Liberation Sans" font-weight="700" font-style="italic" font-size="13.500" fill="#d03828" stroke="#e8a090" stroke-width=".4" transform="translate(5.500 0) scale(.535 1) translate(-5.500 0)">MOSSY OAK</text>
<!-- chrome -->
<g transform="translate(126 19)"><circle r="14" fill="#e53a2c"/><path d="M0 0L-12.100 -7A14 14 0 0 0 1 14z" fill="#3aa544"/><path d="M0 0L1 14A14 14 0 0 0 12.100 -7z" fill="#fbd12c"/><path d="M-12.100 -7A14 14 0 0 1 12.100 -7L0 -7z" fill="#e53a2c"/><circle r="6.500" fill="#f4f4f4"/><circle r="5.200" fill="url(#cb1)"/></g>
<!-- Z -->
<rect x="172" y="3" width="32" height="32" fill="#f79a06"/>
<path d="M181 10h18l2 3l-12 14h12v6h-20l-2 -3l12 -13h-10z" fill="#d47a08"/>
<path d="M179 8h18l2 3l-12 14h12v5h-20l-2 -3l12 -13h-10z" fill="#7a3c08"/>
<path d="M177 7h18v4l-11 13h11v4h-19v-4l11 -13h-10z" fill="#fff"/>
<path d="M178 8h16v2.500l-12 14h12v2.500h-17v-2.500l12 -14h-11z" fill="#3a1890"/>
<!-- messenger -->
<circle cx="245" cy="13" r="4" fill="url(#mg1)"/><path d="M238 30c0 -8 2 -11 7 -11s7 3 7 11c-3 2 -11 2 -14 0z" fill="url(#mg1)"/>
<circle cx="255" cy="12" r="5" fill="url(#mb1)"/><path d="M247 32c0 -10 2 -13 8 -13s8 3 8 13c-3 2 -13 2 -16 0z" fill="url(#mb1)"/>
<path d="M236 26c-3 -6 6 -8 14 -4c6 3 12 2 15 -3" fill="none" stroke="#f0a830" stroke-width="2.200"/>
<rect x="253.500" y="22.500" width="9" height="9" rx="1.500" fill="#f08a20" stroke="#fff" stroke-width="1"/><rect x="255" y="25" width="6" height="3" fill="#ffd8a0"/>
<!-- pencil/eraser -->
<path d="M296 18l10 -9l8 6l-9 13l-6 -1z" fill="#f0a880" stroke="#222" stroke-width=".8"/><path d="M296 18l7 4l2 6l-6 -1z" fill="#d8d8d8" stroke="#444" stroke-width=".6"/>
<path d="M317 11l3 2.500l-16 21l-3 1.500l.5 -3.500z" fill="#e02020" stroke="#600" stroke-width=".6"/><path d="M301 36l.5 -3.500l2.500 2z" fill="#f0d090"/><path d="M310 26l3 -3l-5 8z" fill="#f0c870"/>
<!-- folder -->
<path d="M355 13l1 -3h11l2 2h14l1 2v18h-29z" fill="#e8d070"/><rect x="359" y="10" width="22" height="6" fill="#fff"/><rect x="358" y="9" width="3" height="2" fill="#20b020"/><rect x="367" y="11" width="3" height="2" fill="#e03020"/><rect x="375" y="13" width="3" height="2" fill="#2080e0"/>
<path d="M354 16h30l-1 16h-28z" fill="url(#fd)" stroke="#c8a840" stroke-width=".6"/>
<path d="M358 33v-8q0 -1.500 1.500 -1.500h19q1.500 0 1.500 1.500v8h-5v-5h-12v5z" fill="url(#fb)" stroke="#2880c0" stroke-width=".6"/>
<!-- 3ds -->
<rect x="424" y="3" width="24" height="31" rx="2" fill="url(#mx)"/><path d="M426 3l-2 3v26l2 2" fill="none" stroke="#30b0a8" stroke-width=".8"/>
<path d="M440 9c-6 -1 -11 3 -10 9c1 5 8 7 11 3c2 -3 0 -7 -4 -6c-3 1 -3 5 0 5" fill="none" stroke="#fff" stroke-width="1.600"/><path d="M436 9.500l6 -1.500" stroke="#fff" stroke-width="1.300"/>
</svg>
<div class="t" style="left:1178px;top:12px;font-size:18px;color:#fff;transform:scaleX(.985)">5:29 PM</div>
</div>
</body></html>
